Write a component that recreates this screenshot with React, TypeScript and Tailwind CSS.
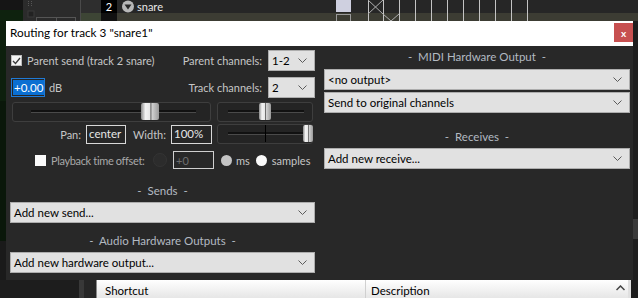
import React from 'react';

const Chevron: React.FC = () => (
  <svg width="9" height="5" viewBox="0 0 9 5" className="shrink-0">
    <path d="M0.5 0.5 L4.5 4.5 L8.5 0.5" fill="none" stroke="#5a5a5a" strokeWidth="1" />
  </svg>
);

const Select: React.FC<{ label: string; className?: string }> = ({ label, className = '' }) => (
  <div
    className={`flex items-center justify-between bg-[#e1e1e1] border border-[#adadad] pl-[3px] pr-[7px] text-[11.5px] text-black ${className}`}
  >
    <span className="whitespace-nowrap leading-none">{label}</span>
    <Chevron />
  </div>
);

const Header: React.FC<{ label: string; className?: string }> = ({ label, className = '' }) => (
  <div className={`h-[14px] flex items-center justify-center whitespace-nowrap text-[11.5px] text-[#b3bac2] ${className}`}>
    -&nbsp; {label} &nbsp;-
  </div>
);

const Thumb: React.FC<{ left: number; width: number }> = ({ left, width }) => (
  <div
    className="absolute top-0 h-[17px] rounded-[2px] bg-[linear-gradient(90deg,#8a8a8a,#f2f2f2_25%,#e6e6e6_50%,#6a6a6a_54%,#d0d0d0_62%,#9a9a9a)]"
    style={{ left, width }}
  />
);

const Slider: React.FC<{
  width: number;
  trackFrom: number;
  trackTo: number;
  thumb: number;
  thumbWidth: number;
  center?: number;
}> = ({ width, trackFrom, trackTo, thumb, thumbWidth, center }) => (
  <div
    className="relative h-[20px] rounded-[3px] border border-[#3e3e3e] bg-[#242424] shrink-0"
    style={{ width }}
  >
    <div
      className="absolute top-[7px] h-[3px] bg-[#111] border-b border-[#4a4a4a]"
      style={{ left: trackFrom, width: trackTo - trackFrom }}
    />
    {center !== undefined && (
      <div className="absolute top-[0px] h-[17px] w-px bg-black" style={{ left: center }} />
    )}
    <Thumb left={thumb} width={thumbWidth} />
  </div>
);

const TextBox: React.FC<{ value: string; className?: string }> = ({ value, className = '' }) => (
  <div
    className={`flex items-center border border-[#d8d8d8] bg-[#262626] pl-[2px] text-[11.5px] leading-none text-[#e6e6e6] ${className}`}
  >
    {value}
  </div>
);

const TopStrip: React.FC = () => (
  <div className="relative flex h-[21px] shrink-0">
    <div className="flex w-[23px] flex-col">
      <div className="h-[10px] bg-[#151515]" />
      <div className="flex-1 bg-[#0e220e]" />
    </div>
    <div className="relative w-[57px] bg-[#2b2b2b]">
      <svg width="57" height="21" className="absolute left-0 top-0">
        {[1, 3, 5].map((y) => (
          <g key={y}>
            <rect x="5" y={y} width="1" height="1" fill="#555" />
            <rect x="8" y={y} width="1" height="1" fill="#555" />
          </g>
        ))}
        <rect x="5" y="11" width="6" height="6" fill="#222" stroke="#3a3a3a" />
        <rect x="13.5" y="17.5" width="20" height="6" fill="none" stroke="#555" />
        <rect x="33.5" y="17.5" width="19" height="6" fill="none" stroke="#555" />
      </svg>
    </div>
    <div className="w-px bg-[#4a4a4a]" />
    <div className="flex flex-1 flex-col">
      <div className="flex h-[13px] items-center bg-[#262626] text-[11px] leading-none">
        <div className="h-full w-[20px] bg-[#2e2e2e]" />
        <div className="flex h-full w-[16px] items-center justify-center bg-black text-white">2</div>
        <svg width="14" height="13" viewBox="0 0 14 13" className="ml-[4px]">
          <circle cx="7" cy="6.5" r="6" fill="#b8b8b8" />
          <path d="M3.5 4.5 L10.5 4.5 L7 9.5 Z" fill="#2a2a2a" />
        </svg>
        <span className="ml-[2px] text-[#e8e8e8]">snare</span>
      </div>
      <div className="flex h-[8px] bg-[#3c3c33]">
        <div className="h-full w-[20px] bg-[#3d4535]" />
        <div className="h-full w-[16px] bg-[#111]" />
      </div>
    </div>
    <svg width="200" height="21" className="absolute left-[336px] top-0">
      <rect x="0" y="0" width="15" height="12" fill="#cfd0e0" />
      <rect x="0.5" y="14.5" width="14" height="8" fill="#3c3c33" stroke="#9a9a9a" />
      {[32, 47, 63, 79, 95, 111, 127, 143, 159, 175, 191].map((x) => (
        <line key={x} x1={x + 0.5} y1="0" x2={x + 0.5} y2="21" stroke="#c4c4c4" />
      ))}
      <path d="M32 0 L47 14 M47 0 L32 14" stroke="#b0b0b0" />
      <path d="M47 14 L55 21 M63 14 L55 21" stroke="#b0b0b0" />
    </svg>
  </div>
);

const BottomStrip: React.FC = () => (
  <div className="flex h-[18px] shrink-0 text-[11.5px] leading-none text-black">
    <div className="w-[79px] bg-[#1d1d1d]" />
    <div className="w-[5px] bg-[#383838]" />
    <div className="w-[12px] bg-[#262626]" />
    <div className="w-px bg-[#8a8a8a]" />
    <div className="flex w-[268px] items-center bg-[linear-gradient(180deg,#ffffff,#e6e6e6)] pl-[8px] pt-[3px]">
      Shortcut
    </div>
    <div className="w-px bg-[#d0d0d0]" />
    <div className="flex w-[246px] items-center bg-[linear-gradient(180deg,#ffffff,#e6e6e6)] pl-[5px] pt-[3px]">
      Description
    </div>
    <div className="flex w-[16px] items-start justify-center bg-[linear-gradient(180deg,#ffffff,#e6e6e6)] pt-[5px]">
      <svg width="9" height="6" viewBox="0 0 9 6">
        <path d="M0.5 5 L4.5 1 L8.5 5" fill="none" stroke="#444" strokeWidth="1.5" />
      </svg>
    </div>
    <div className="w-[3px] bg-[#e0e0e0]" />
    <div className="flex-1 bg-[#1d1d1d]" />
  </div>
);

const RoutingDialog: React.FC = () => (
  <div className="absolute left-[6px] top-[21px] flex h-[259px] w-[627px] flex-col font-['Lato','Liberation_Sans',sans-serif]">
    <div className="flex h-[25px] shrink-0 items-start justify-between bg-white">
      <span className="pl-[4px] pt-[6px] text-[11.75px] leading-none text-black">
        Routing for track 3 "snare1"
      </span>
      <div className="mt-[2px] flex h-[19px] w-[19px] items-center justify-center bg-[#c75050] text-[10px] font-bold leading-none text-white">
        x
      </div>
    </div>

    <div className="flex flex-1 whitespace-nowrap bg-[#282828] text-[11px] leading-none text-[#c6c6c6]">
      {/* left column */}
      <div className="flex w-[312px] shrink-0 flex-col pl-[4px] pr-[3px]">
        <div className="mt-[4px] flex h-[21px] items-center">
          <div className="ml-[1px] flex h-[11px] w-[11px] items-center justify-center border border-[#bcbcbc] bg-[#f4f4f4]">
            <svg width="9" height="8" viewBox="0 0 9 8">
              <path d="M1 4 L3.5 6.5 L8 1" fill="none" stroke="#3a3a3a" strokeWidth="1.3" />
            </svg>
          </div>
          <span className="ml-[5px]">Parent send (track 2 snare)</span>
          <span className="ml-auto mr-[6px]">Parent channels:</span>
          <Select label="1-2" className="h-[21px] w-[47px]" />
        </div>

        <div className="mt-[6px] flex h-[21px] items-center">
          <div className="ml-[1px] flex h-[19px] w-[34px] items-center border border-[#1f7ad6] bg-[#262626] pl-[1px]">
            <span className="bg-[#0a6fd2] px-[1px] py-[2px] text-[11.5px] leading-none text-white">+0.00</span>
            <div className="h-[13px] w-px bg-[#e07a20]" />
          </div>
          <span className="ml-[4px]">dB</span>
          <span className="ml-auto mr-[6px]">Track channels:</span>
          <Select label="2" className="h-[21px] w-[47px]" />
        </div>

        <div className="mt-[4px] flex h-[20px] items-start gap-[6px] pl-[2px]">
          <Slider width={199} trackFrom={18} trackTo={183} thumb={128} thumbWidth={18} />
          <Slider width={96} trackFrom={10} trackTo={86} thumb={41} thumbWidth={12} />
        </div>

        <div className="mt-[2px] flex h-[20px] items-center">
          <span className="ml-auto mr-[5px]">Pan:</span>
          <TextBox value="center" className="h-[19px] w-[40px]" />
          <span className="ml-[7px] mr-[5px]">Width:</span>
          <TextBox value="100%" className="h-[19px] w-[41px]" />
          <div className="ml-[5px]">
            <Slider width={96} trackFrom={10} trackTo={86} thumb={85} thumbWidth={10} center={47} />
          </div>
          <div className="w-[2px]" />
        </div>

        <div className="mt-[7px] flex h-[18px] items-center">
          <div className="ml-[25px] h-[11px] w-[11px] shrink-0 bg-[#fafafa]" />
          <span className="ml-[5px] w-[99px] shrink-0 tracking-[-0.35px] text-[#a8a8a8]">Playback time offset:</span>
          <div className="ml-[3px] h-[14px] w-[14px] shrink-0 rounded-full border border-[#343434] bg-[#2c2c2c]" />
          <div className="ml-[6px] flex h-[18px] w-[41px] shrink-0 items-center border border-[#cfcfcf] bg-[#282828] pl-[2px] text-[#6e6e6e]">
            +0
          </div>
          <div className="ml-[7px] h-[11px] w-[11px] shrink-0 rounded-full bg-[#c4c4c4]" />
          <span className="ml-[4px]">ms</span>
          <div className="ml-[6px] h-[11px] w-[11px] shrink-0 rounded-full bg-[#fafafa]" />
          <span className="ml-[5px]">samples</span>
        </div>

        <Header label="Sends" className="mt-[15px]" />
        <Select label="Add new send..." className="mt-[4px] h-[21px] w-[305px]" />

        <Header label="Audio Hardware Outputs" className="mt-[11px]" />
        <Select label="Add new hardware output..." className="mt-[4px] h-[21px] w-[305px]" />
      </div>

      {/* right column */}
      <div className="flex flex-1 flex-col pl-[6px] pr-[3px]">
        <Header label="MIDI Hardware Output" className="mt-[4px]" />
        <Select label="<no output>" className="mt-[5px] h-[21px] w-[306px]" />
        <Select label="Send to original channels" className="mt-[2px] h-[21px] w-[306px]" />
        <Header label="Receives" className="mt-[17px]" />
        <Select label="Add new receive..." className="mt-[4px] h-[21px] w-[306px]" />
      </div>
    </div>
  </div>
);

const App: React.FC = () => {
  return (
    <div className="relative flex h-[298px] w-[638px] flex-col overflow-hidden bg-[#1e1e1e] font-['Lato','Liberation_Sans',sans-serif]">
      <TopStrip />
      <div className="flex h-[259px] shrink-0">
        <div className="flex w-[6px] flex-col">
          <div className="h-[80px] bg-[#0d1f0d]" />
          <div className="h-[140px] bg-[#0a170a]" />
          <div className="flex-1 bg-[#1a1a1a]" />
        </div>
        <div className="flex-1 bg-[#222]" />
        <div className="flex w-[5px] flex-col bg-[#1e1e1e]">
          <div className="h-[198px]" />
          <div className="h-[20px] bg-[#3a3a3a]" />
        </div>
      </div>
      <BottomStrip />
      <RoutingDialog />
    </div>
  );
};

export default App;
